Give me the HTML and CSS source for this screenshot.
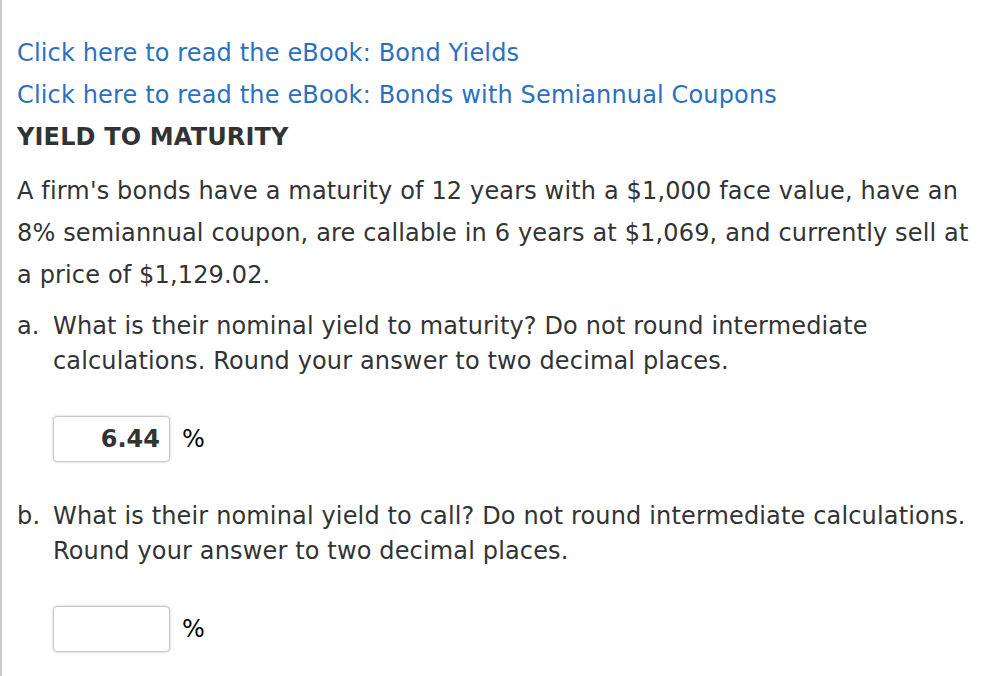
FILE: index.html
```html
<!DOCTYPE html>
<html>
<head>
<meta charset="utf-8">
<title>Yield to Maturity</title>
<link rel="stylesheet" href="styles.css">
</head>
<body>
    <div class="pregunta">
        <p class="enlace"><a href="#">Click here to read the eBook: Bond Yields</a></p>
        <p class="enlace"><a href="#">Click here to read the eBook: Bonds with Semiannual Coupons</a></p>
        <h2 class="titulo">YIELD TO MATURITY</h2>
        <p class="texto">A firm's bonds have a maturity of 12 years with a $1,000 face value, have an 8% semiannual coupon, are callable in 6 years at $1,069, and currently sell at a price of $1,129.02.</p>

        <div class="parte">
            <span class="letra">a.</span>
            <span>What is their nominal yield to maturity? Do not round intermediate calculations. Round your answer to two decimal places.</span>
        </div>
        <div class="respuesta">
            <input class="caja" type="text" value="6.44"> <span class="unidad">%</span>
        </div>

        <div class="parte">
            <span class="letra">b.</span>
            <span>What is their nominal yield to call? Do not round intermediate calculations. Round your answer to two decimal places.</span>
        </div>
        <div class="respuesta">
            <input class="caja" type="text" value=""> <span class="unidad">%</span>
        </div>
    </div>
</body>
</html>
```

FILE: styles.css
```css
body {
    margin: 0;
    background-color: #fff;
    font-family: "DejaVu Sans", Verdana, sans-serif;
    font-size: 24px;
    letter-spacing: 0.15px;
    color: #333;
}
.pregunta {
    border-left: 2px solid #ccc;
    padding: 32px 6px 20px 15px;
    min-height: 630px;
}
.enlace {
    margin: 0;
    line-height: 42px;
}
.enlace a {
    color: #2b70bf;
    text-decoration: none;
}
.titulo {
    margin: 0 0 12px 0;
    font-size: 24px;
    line-height: 42px;
    font-weight: bold;
    color: #333;
}
.texto {
    margin: 0;
    line-height: 42px;
}
.parte {
    display: flex;
    margin-top: 13px;
    line-height: 35px;
}
.letra {
    width: 36px;
    flex-shrink: 0;
}
.respuesta {
    display: flex;
    align-items: center;
    margin: 37px 0 37px 36px;
}
.caja {
    width: 117px;
    height: 46px;
    box-sizing: border-box;
    border: 1px solid #c8c8c8;
    border-radius: 4px;
    box-shadow: 0 0 3px rgba(0, 0, 0, 0.2);
    font-family: "DejaVu Sans", Verdana, sans-serif;
    font-size: 24px;
    font-weight: bold;
    color: #333;
    text-align: right;
    padding: 0 9px;
}
.unidad {
    margin-left: 12px;
    color: #000;
}
```
